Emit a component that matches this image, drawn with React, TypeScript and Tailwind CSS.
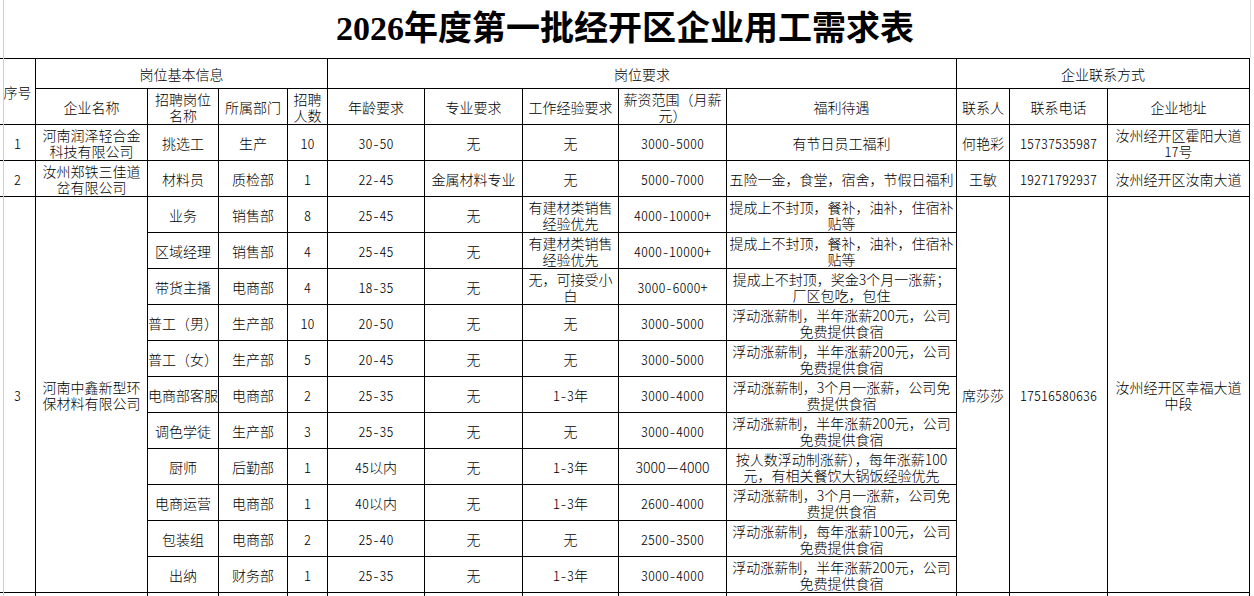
import React from 'react';

type Position = {
  post: string;
  dept: string;
  count: string;
  age: string;
  major: string;
  exp: string;
  salary: string;
  welfare: string;
};

type Company = {
  no: string;
  name: string;
  contact: string;
  phone: string;
  address: string;
  positions: Position[];
};

const companies: Company[] = [
  {
    no: '1',
    name: '河南润泽轻合金\n科技有限公司',
    contact: '何艳彩',
    phone: '15737535987',
    address: '汝州经开区霍阳大道\n17号',
    positions: [
      { post: '挑选工', dept: '生产', count: '10', age: '30-50', major: '无', exp: '无', salary: '3000-5000', welfare: '有节日员工福利' },
    ],
  },
  {
    no: '2',
    name: '汝州郑铁三佳道\n岔有限公司',
    contact: '王敏',
    phone: '19271792937',
    address: '汝州经开区汝南大道',
    positions: [
      { post: '材料员', dept: '质检部', count: '1', age: '22-45', major: '金属材料专业', exp: '无', salary: '5000-7000', welfare: '五险一金，食堂，宿舍，节假日福利' },
    ],
  },
  {
    no: '3',
    name: '河南中鑫新型环\n保材料有限公司',
    contact: '席莎莎',
    phone: '17516580636',
    address: '汝州经开区幸福大道\n中段',
    positions: [
      { post: '业务', dept: '销售部', count: '8', age: '25-45', major: '无', exp: '有建材类销售\n经验优先', salary: '4000-10000+', welfare: '提成上不封顶，餐补，油补，住宿补\n贴等' },
      { post: '区域经理', dept: '销售部', count: '4', age: '25-45', major: '无', exp: '有建材类销售\n经验优先', salary: '4000-10000+', welfare: '提成上不封顶，餐补，油补，住宿补\n贴等' },
      { post: '带货主播', dept: '电商部', count: '4', age: '18-35', major: '无', exp: '无，可接受小\n白', salary: '3000-6000+', welfare: '提成上不封顶，奖金3个月一涨薪；\n厂区包吃，包住' },
      { post: '普工（男）', dept: '生产部', count: '10', age: '20-50', major: '无', exp: '无', salary: '3000-5000', welfare: '浮动涨薪制，半年涨薪200元，公司\n免费提供食宿' },
      { post: '普工（女）', dept: '生产部', count: '5', age: '20-45', major: '无', exp: '无', salary: '3000-5000', welfare: '浮动涨薪制，半年涨薪200元，公司\n免费提供食宿' },
      { post: '电商部客服', dept: '电商部', count: '2', age: '25-35', major: '无', exp: '1-3年', salary: '3000-4000', welfare: '浮动涨薪制，3个月一涨薪，公司免\n费提供食宿' },
      { post: '调色学徒', dept: '生产部', count: '3', age: '25-35', major: '无', exp: '无', salary: '3000-4000', welfare: '浮动涨薪制，半年涨薪200元，公司\n免费提供食宿' },
      { post: '厨师', dept: '后勤部', count: '1', age: '45以内', major: '无', exp: '1-3年', salary: '3000－4000', welfare: '按人数浮动制涨薪），每年涨薪100\n元，有相关餐饮大锅饭经验优先' },
      { post: '电商运营', dept: '电商部', count: '1', age: '40以内', major: '无', exp: '1-3年', salary: '2600-4000', welfare: '浮动涨薪制，3个月一涨薪，公司免\n费提供食宿' },
      { post: '包装组', dept: '电商部', count: '2', age: '25-40', major: '无', exp: '无', salary: '2500-3500', welfare: '浮动涨薪制，每年涨薪100元，公司\n免费提供食宿' },
      { post: '出纳', dept: '财务部', count: '1', age: '25-35', major: '无', exp: '1-3年', salary: '3000-4000', welfare: '浮动涨薪制，半年涨薪200元，公司\n免费提供食宿' },
    ],
  },
];

// widths chosen so the grid lines land where the sheet draws them
const colWidths = [36, 112, 71, 69, 40, 97, 98, 96, 108, 230, 53, 98, 142];

const cell = 'border-r border-b border-black p-0 text-center align-middle whitespace-pre leading-[16px]';

// half-width digits like the sheet font, but only where no full-width punctuation would get squeezed
const fullWidthPunct = /[\u3000-\u303f\uff00-\uffef]/;

function Cell({ children, rowSpan, colSpan }: { children?: React.ReactNode; rowSpan?: number; colSpan?: number }) {
  const text = typeof children === 'string' ? children : '';
  const half = text !== '' && !fullWidthPunct.test(text);
  return (
    <td rowSpan={rowSpan} colSpan={colSpan} className={`${cell} ${half ? "[font-feature-settings:'hwid']" : ''}`}>
      {children}
    </td>
  );
}

export default function App() {
  return (
    <div className="relative w-[1254px] h-[596px] overflow-hidden bg-white text-black text-[14px] font-light font-[family-name:Noto_Sans_CJK_SC,sans-serif]">
      <div className="h-[58px] w-[1251px] border-r border-[#dadce0] flex items-center justify-center">
        <h1 className="text-[34px] font-bold leading-none font-[family-name:Liberation_Serif,Noto_Sans_CJK_SC,serif]">
          2026年度第一批经开区企业用工需求表
        </h1>
      </div>

      <table className="table-fixed border-separate border-spacing-0 w-[1250px] border-t border-black">
        <colgroup>
          {colWidths.map((w, i) => (
            <col key={i} style={{ width: w }} />
          ))}
        </colgroup>
        <thead>
          <tr className="h-[30px]">
            <Cell rowSpan={2}>序号</Cell>
            <Cell colSpan={4}>岗位基本信息</Cell>
            <Cell colSpan={5}>岗位要求</Cell>
            <Cell colSpan={3}>企业联系方式</Cell>
          </tr>
          <tr className="h-[36px]">
            <Cell>企业名称</Cell>
            <Cell>{'招聘岗位\n名称'}</Cell>
            <Cell>所属部门</Cell>
            <Cell>{'招聘\n人数'}</Cell>
            <Cell>年龄要求</Cell>
            <Cell>专业要求</Cell>
            <Cell>工作经验要求</Cell>
            <Cell>{'薪资范围（月薪\n元）'}</Cell>
            <Cell>福利待遇</Cell>
            <Cell>联系人</Cell>
            <Cell>联系电话</Cell>
            <Cell>企业地址</Cell>
          </tr>
        </thead>
        <tbody>
          {companies.map((c) =>
            c.positions.map((p, i) => (
              <tr key={c.no + '-' + i} className="h-[36px]">
                {i === 0 && (
                  <>
                    <Cell rowSpan={c.positions.length}>{c.no}</Cell>
                    <Cell rowSpan={c.positions.length}>{c.name}</Cell>
                  </>
                )}
                <Cell>{p.post}</Cell>
                <Cell>{p.dept}</Cell>
                <Cell>{p.count}</Cell>
                <Cell>{p.age}</Cell>
                <Cell>{p.major}</Cell>
                <Cell>{p.exp}</Cell>
                <Cell>{p.salary}</Cell>
                <Cell>{p.welfare}</Cell>
                {i === 0 && (
                  <>
                    <Cell rowSpan={c.positions.length}>{c.contact}</Cell>
                    <Cell rowSpan={c.positions.length}>{c.phone}</Cell>
                    <Cell rowSpan={c.positions.length}>{c.address}</Cell>
                  </>
                )}
              </tr>
            ))
          )}
          <tr className="h-[36px]">
            {colWidths.map((_, i) => (
              <Cell key={i} />
            ))}
          </tr>
        </tbody>
      </table>

      {/* sheet column edge on the far left */}
      <div className="absolute left-[3px] top-0 bottom-0 w-px bg-[#c5d0e0]" />
    </div>
  );
}
